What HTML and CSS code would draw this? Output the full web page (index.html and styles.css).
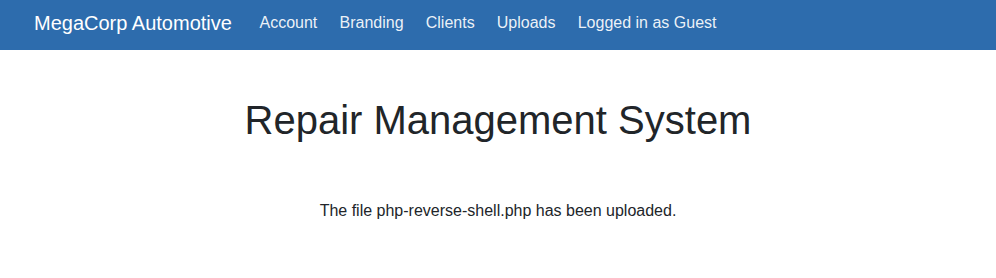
FILE: index.html
```html
<!DOCTYPE html>
<html lang="en">

<head>
    <meta charset="UTF-8">
    <meta name="viewport" content="width=device-width, initial-scale=1.0">
    <title>MegaCorp Automotive</title>
    <link rel="stylesheet" href="styles.css">
</head>

<body>
    <!-- Top Navigation -->
    <nav class="navbar">
        <a class="navbar-brand" href="#">MegaCorp Automotive</a>
        <ul class="navbar-nav">
            <li><a class="nav-link" href="#">Account</a></li>
            <li><a class="nav-link" href="#">Branding</a></li>
            <li><a class="nav-link" href="#">Clients</a></li>
            <li><a class="nav-link" href="#">Uploads</a></li>
            <li><span class="nav-link">Logged in as Guest</span></li>
        </ul>
    </nav>

    <div class="container">
        <h1>Repair Management System</h1>
        <p class="message">The file php-reverse-shell.php has been uploaded.</p>
    </div>
</body>

</html>
```

FILE: styles.css
```css
/* Basic Styles */
body {
    font-family: "Liberation Sans", Arial, sans-serif;
    font-size: 16px;
    line-height: 1.5;
    color: #212529;
    background-color: #fff;
    margin: 0;
    padding: 0;
}

.navbar {
    display: flex;
    align-items: flex-start;
    height: 50px;
    box-sizing: border-box;
    padding: 8px 16px 12px 34px;
    background-color: #2d6cad;
}

.navbar-brand {
    font-size: 20px;
    line-height: 30px;
    color: #fff;
    text-decoration: none;
    margin-right: 16.5px;
}

.navbar-nav {
    display: flex;
    list-style: none;
    margin: 0;
    padding: 0;
}

.nav-link {
    display: block;
    padding: 3px 11.1px;
    line-height: 24px;
    color: rgba(255, 255, 255, 0.92);
    text-decoration: none;
}

.container {
    text-align: center;
    padding: 0 15px;
}

h1 {
    font-size: 40px;
    font-weight: 400;
    line-height: 1.2;
    margin: 46px 0 8px;
}

.message {
    margin: 55px 0 16px;
}
```
